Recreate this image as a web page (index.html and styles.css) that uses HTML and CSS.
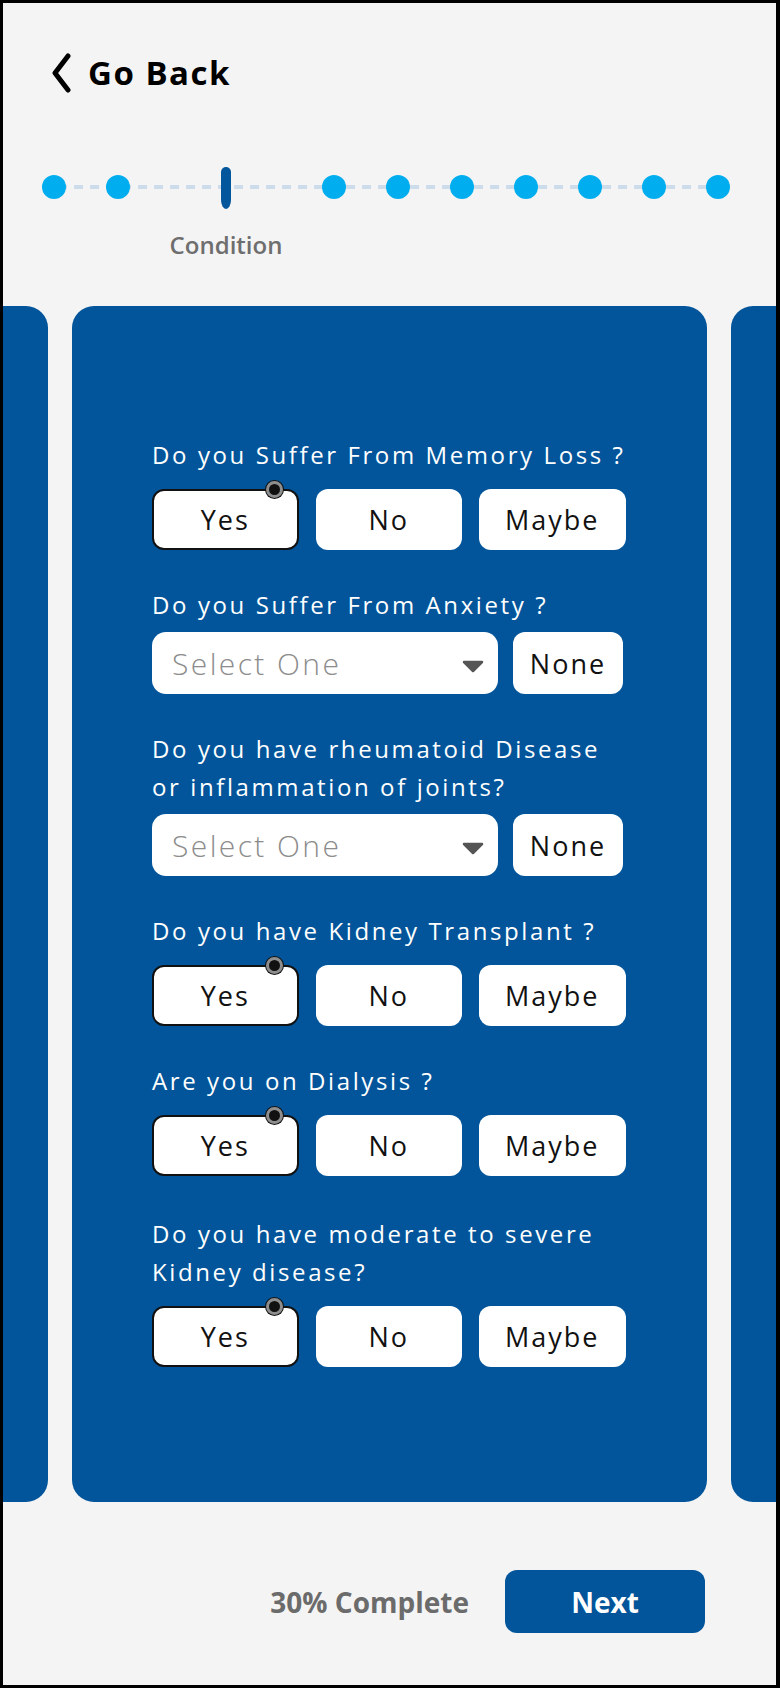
FILE: index.html
```html
<!DOCTYPE html>
<html lang="en">
<head>
<meta charset="utf-8">
<title>Condition</title>
<link rel="stylesheet" href="styles.css">
</head>
<body>
<div class="frame">
  <header class="header">
    <a class="back" href="#">
      <svg class="back-icon" width="22" height="40" viewBox="0 0 22 40" aria-hidden="true">
        <path d="M18 3 L5 20 L18 37" fill="none" stroke="#000" stroke-width="5" stroke-linecap="round" stroke-linejoin="round"/>
      </svg>
      <span>Go Back</span>
    </a>
  </header>

  <nav class="stepper">
    <div class="step"><span class="dot"></span></div>
    <div class="step"><span class="dot"></span></div>
    <div class="step step-active"><span class="pill"></span><span class="step-label">Condition</span></div>
    <div class="step"><span class="dot"></span></div>
    <div class="step"><span class="dot"></span></div>
    <div class="step"><span class="dot"></span></div>
    <div class="step"><span class="dot"></span></div>
    <div class="step"><span class="dot"></span></div>
    <div class="step"><span class="dot"></span></div>
    <div class="step"><span class="dot"></span></div>
  </nav>

  <section class="carousel">
    <div class="track">
      <div class="card card-side"></div>
      <div class="card card-main">
        <div class="q">
          <p class="q-label">Do you Suffer From Memory Loss ?</p>
          <div class="options">
            <button class="opt opt-selected">Yes<span class="badge"></span></button>
            <button class="opt">No</button>
            <button class="opt">Maybe</button>
          </div>
        </div>
        <div class="q">
          <p class="q-label">Do you Suffer From Anxiety ?</p>
          <div class="select-row">
            <div class="select"><span class="placeholder">Select One</span>
              <svg class="caret" width="22" height="13" viewBox="0 0 22 13" aria-hidden="true"><path d="M2 2 H20 L11 11 Z" fill="#555" stroke="#555" stroke-width="2.5" stroke-linejoin="round"/></svg>
            </div>
            <button class="opt">None</button>
          </div>
        </div>
        <div class="q">
          <p class="q-label">Do you have rheumatoid Disease<br>or inflammation of joints?</p>
          <div class="select-row">
            <div class="select"><span class="placeholder">Select One</span>
              <svg class="caret" width="22" height="13" viewBox="0 0 22 13" aria-hidden="true"><path d="M2 2 H20 L11 11 Z" fill="#555" stroke="#555" stroke-width="2.5" stroke-linejoin="round"/></svg>
            </div>
            <button class="opt">None</button>
          </div>
        </div>
        <div class="q">
          <p class="q-label">Do you have Kidney Transplant ?</p>
          <div class="options">
            <button class="opt opt-selected">Yes<span class="badge"></span></button>
            <button class="opt">No</button>
            <button class="opt">Maybe</button>
          </div>
        </div>
        <div class="q">
          <p class="q-label">Are you on Dialysis ?</p>
          <div class="options">
            <button class="opt opt-selected">Yes<span class="badge"></span></button>
            <button class="opt">No</button>
            <button class="opt">Maybe</button>
          </div>
        </div>
        <div class="q">
          <p class="q-label">Do you have moderate to severe<br>Kidney disease?</p>
          <div class="options">
            <button class="opt opt-selected">Yes<span class="badge"></span></button>
            <button class="opt">No</button>
            <button class="opt">Maybe</button>
          </div>
        </div>
      </div>
      <div class="card card-side"></div>
    </div>
  </section>

  <footer class="footer">
    <span class="progress">30% Complete</span>
    <button class="next">Next</button>
  </footer>
</div>
</body>
</html>
```

FILE: styles.css
```css
* { box-sizing: border-box; }

html, body {
  margin: 0;
  padding: 0;
  background: #000;
}

body {
  font-family: "Open Sans", "Noto Sans", sans-serif;
}

.frame {
  width: 780px;
  height: 1688px;
  border: 3px solid #000;
  border-right-width: 4px;
  background: #f4f4f4;
  overflow: hidden;
  display: flex;
  flex-direction: column;
}

/* Header */
.header {
  padding: 50px 0 0 47px;
}

.back {
  display: inline-flex;
  align-items: center;
  gap: 16px;
  color: #000;
  text-decoration: none;
  font-weight: 700;
  font-size: 33px;
  letter-spacing: 1.5px;
  line-height: 40px;
}

.back-icon { display: block; }

/* Stepper */
.stepper {
  margin: 69px 0 0 39px;
  width: 688px;
  display: flex;
  align-items: flex-start;
  gap: 40px;
  background-image: repeating-linear-gradient(to right, #cddcea 0 9px, transparent 9px 16px);
  background-size: 100% 4px;
  background-position: 0 18px;
  background-repeat: no-repeat;
}

.step {
  display: flex;
  flex-direction: column;
  align-items: center;
}

.dot {
  display: block;
  width: 24px;
  height: 24px;
  margin-top: 8px;
  border-radius: 50%;
  background: #00aeef;
}

.step-active { width: 112px; }

.pill {
  display: block;
  width: 10px;
  height: 42px;
  border-radius: 5px 5px 5px 5px / 5px 5px 9px 9px;
  background: #02569b;
}

.step-label {
  margin-top: 21px;
  white-space: nowrap;
  font-size: 24px;
  font-weight: 600;
  line-height: 30px;
  color: #6e6e6e;
}

/* Carousel */
.carousel {
  margin-top: 46px;
  overflow: hidden;
}

.track {
  display: flex;
  gap: 24px;
  margin-left: -589px;
}

.card {
  flex: 0 0 634px;
  height: 1196px;
  border-radius: 22px;
  background: #02559a;
}

.card-main {
  padding: 130px 81px 0 80px;
}

.q + .q { margin-top: 36px; }
.q:last-child { margin-top: 39px; }

.q-label {
  margin: 0;
  color: #fff;
  font-size: 24px;
  font-weight: 400;
  letter-spacing: 2.6px;
  line-height: 38px;
  white-space: nowrap;
}

.options {
  margin-top: 15px;
  display: grid;
  grid-template-columns: repeat(3, 1fr);
  gap: 17px;
}

.opt {
  position: relative;
  height: 61px;
  border: 0;
  border-radius: 12px;
  background: #fff;
  color: #111;
  font-family: inherit;
  font-size: 27px;
  font-weight: 400;
  letter-spacing: 2px;
  padding: 0;
}

.opt-selected {
  border: 2px solid #111;
}

.badge {
  position: absolute;
  top: -10.5px;
  right: 14px;
  width: 17px;
  height: 17px;
  border-radius: 50%;
  background: #111;
  border: 3px solid #8e8e8e;
  box-shadow: 0 0 0 1px #111;
}

.select-row {
  margin-top: 8px;
  display: grid;
  grid-template-columns: 346px 110px;
  gap: 15px;
}

.select-row .opt { height: 62px; }

.select {
  height: 62px;
  border-radius: 14px;
  background: #fff;
  display: flex;
  align-items: center;
  justify-content: space-between;
  padding: 0 14px 0 20px;
}

.placeholder {
  color: #8c8c8c;
  font-size: 30px;
  font-weight: 300;
  letter-spacing: 2.4px;
}

.caret { display: block; margin-top: 6px; }

/* Footer */
.footer {
  margin-top: 68px;
  padding-right: 71px;
  display: flex;
  justify-content: flex-end;
  align-items: center;
  gap: 36px;
}

.progress {
  color: #6b6b6b;
  font-size: 28px;
  font-weight: 700;
}

.next {
  width: 200px;
  height: 63px;
  border: 0;
  border-radius: 12px;
  background: #02559a;
  color: #fff;
  font-family: inherit;
  font-size: 28px;
  font-weight: 700;
}
```
